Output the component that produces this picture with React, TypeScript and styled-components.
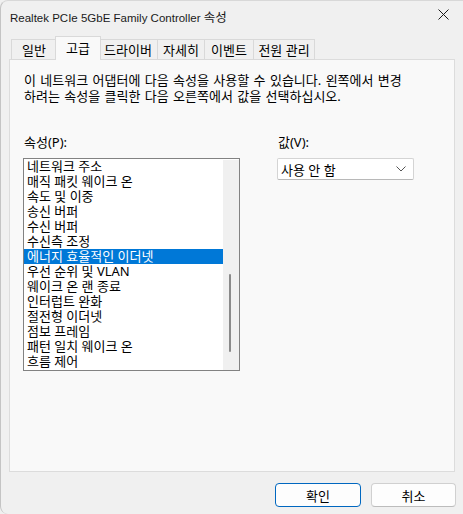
import React, { FC } from "react";
import styled, { createGlobalStyle } from "styled-components";

const GlobalStyle = createGlobalStyle`
  html, body {
    margin: 0;
    padding: 0;
    background: #f0f0f0;
  }
  * {
    box-sizing: border-box;
  }
`;

const font = `"Noto Sans", "Noto Sans CJK KR", sans-serif`;

const Window = styled.div`
  width: 463px;
  height: 514px;
  background: #f0f0f0;
  border-left: 1px solid #c4c4c4;
  border-top: 1px solid #d8d8d8;
  border-radius: 8px 0 0 8px;
  display: flex;
  flex-direction: column;
  font-family: ${font};
  font-size: 13px;
  color: #000;
  overflow: hidden;
`;

const TitleBar = styled.div`
  height: 29px;
  display: flex;
  align-items: center;
  justify-content: space-between;
  padding: 0 8px 0 9px;
`;

const Title = styled.div`
  font-family: "Liberation Sans", "Noto Sans CJK KR", sans-serif;
  font-size: 11.5px;
  color: #1a1a1a;
  padding-top: 1px;
`;

const TitleKo = styled.span`
  font-size: 12.5px;
`;

const CloseButton = styled.div`
  width: 24px;
  height: 24px;
  display: flex;
  align-items: center;
  justify-content: center;
  margin-top: -2px;
`;

const Body = styled.div`
  flex: 1;
  display: flex;
  flex-direction: column;
  padding: 7px 7px 0 8px;
`;

const TabStrip = styled.div`
  display: flex;
  align-items: flex-end;
  height: 23px;
  padding-left: 2px;
  position: relative;
  z-index: 1;
`;

const Tab = styled.div<{ $active?: boolean; $w: number }>`
  width: ${(p) => p.$w}px;
  height: ${(p) => (p.$active ? 24 : 21)}px;
  margin: ${(p) => (p.$active ? "0 -2px 0 -2px" : "0")};
  display: flex;
  align-items: center;
  justify-content: center;
  white-space: nowrap;
  background: ${(p) => (p.$active ? "#f9f9f9" : "#f0f0f0")};
  border: 1px solid #d9d9d9;
  border-bottom: ${(p) => (p.$active ? "none" : "1px solid #d9d9d9")};
  border-left-width: ${(p) => (p.$active ? 1 : 0)}px;
  padding-bottom: ${(p) => (p.$active ? 3 : 1)}px;
  position: relative;
  z-index: ${(p) => (p.$active ? 2 : 1)};
  &:first-child {
    border-left-width: 1px;
  }
`;

const Panel = styled.div`
  height: 413px;
  margin-top: -1px;
  margin-right: 1px;
  background: #f9f9f9;
  border: 1px solid #dcdcdc;
  padding: 12px 14px 0 13px;
  display: flex;
  flex-direction: column;
`;

const Description = styled.p`
  margin: 0 0 0 1px;
  line-height: 16px;
  word-spacing: 1px;
  white-space: nowrap;
`;

const Columns = styled.div`
  display: flex;
  gap: 37px;
  margin-top: 30px;
`;

const Column = styled.div<{ $w: number }>`
  width: ${(p) => p.$w}px;
  display: flex;
  flex-direction: column;
`;

const Label = styled.div`
  line-height: 16px;
  margin: 0 0 8px 1px;
`;

const ListBox = styled.div`
  height: 213px;
  background: #fff;
  border: 1px solid #828282;
  display: flex;
`;

const Items = styled.div`
  flex: 1;
  display: flex;
  flex-direction: column;
`;

const Item = styled.div<{ $selected?: boolean }>`
  height: 15px;
  line-height: 15px;
  padding-left: 3px;
  white-space: nowrap;
  background: ${(p) => (p.$selected ? "#0078d7" : "transparent")};
  color: ${(p) => (p.$selected ? "#fff" : "#000")};
`;

const ScrollTrack = styled.div`
  width: 16px;
  margin: 1px 0 0;
  height: 210px;
  background: #f0f0f0;
  display: flex;
  flex-direction: column;
  align-items: center;
  padding-top: 114px;
`;

const ScrollThumb = styled.div`
  width: 2px;
  height: 78px;
  background: #8a8a8a;
  border-radius: 1px;
  margin-left: -2px;
`;

const Select = styled.div`
  height: 22px;
  background: #fff;
  border: 1px solid #d4d4d4;
  border-bottom-color: #b8b8b8;
  border-radius: 2px;
  display: flex;
  align-items: center;
  justify-content: space-between;
  padding: 0 7px 0 3px;
`;

const Footer = styled.div`
  display: flex;
  justify-content: flex-end;
  gap: 10px;
  padding-top: 11px;
`;

const Button = styled.div<{ $default?: boolean; $w: number }>`
  width: ${(p) => p.$w}px;
  height: 24px;
  display: flex;
  align-items: center;
  justify-content: center;
  background: #fdfdfd;
  border: 1px solid ${(p) => (p.$default ? "#0067c0" : "#d0d0d0")};
  border-bottom-color: ${(p) => (p.$default ? "#0067c0" : "#bcbcbc")};
  border-radius: 4px;
`;

const tabs = [
  { label: "일반", w: 46 },
  { label: "고급", w: 46, active: true },
  { label: "드라이버", w: 59 },
  { label: "자세히", w: 47 },
  { label: "이벤트", w: 49 },
  { label: "전원 관리", w: 61 },
];

const properties = [
  "네트워크 주소",
  "매직 패킷 웨이크 온",
  "속도 및 이중",
  "송신 버퍼",
  "수신 버퍼",
  "수신측 조정",
  "에너지 효율적인 이더넷",
  "우선 순위 및 VLAN",
  "웨이크 온 랜 종료",
  "인터럽트 완화",
  "절전형 이더넷",
  "점보 프레임",
  "패턴 일치 웨이크 온",
  "흐름 제어",
];

const App: FC = () => {
  return (
    <>
      <GlobalStyle />
      <Window>
        <TitleBar>
          <Title>
            Realtek PCIe 5GbE Family Controller <TitleKo>속성</TitleKo>
          </Title>
          <CloseButton>
            <svg width="11" height="11" viewBox="0 0 11 11">
              <path d="M0.5 0.5 L10.5 10.5 M10.5 0.5 L0.5 10.5" stroke="#1a1a1a" strokeWidth="1" />
            </svg>
          </CloseButton>
        </TitleBar>
        <Body>
          <TabStrip>
            {tabs.map((t) => (
              <Tab key={t.label} $w={t.w} $active={t.active}>
                {t.label}
              </Tab>
            ))}
          </TabStrip>
          <Panel>
            <Description>
              이 네트워크 어댑터에 다음 속성을 사용할 수 있습니다. 왼쪽에서 변경
              <br />
              하려는 속성을 클릭한 다음 오른쪽에서 값을 선택하십시오.
            </Description>
            <Columns>
              <Column $w={217}>
                <Label>속성(P):</Label>
                <ListBox>
                  <Items>
                    {properties.map((p, i) => (
                      <Item key={p} $selected={i === 6}>
                        {p}
                      </Item>
                    ))}
                  </Items>
                  <ScrollTrack>
                    <ScrollThumb />
                  </ScrollTrack>
                </ListBox>
              </Column>
              <Column $w={137}>
                <Label>값(V):</Label>
                <Select>
                  <span>사용 안 함</span>
                  <svg width="10" height="6" viewBox="0 0 10 6">
                    <path d="M0.5 0.5 L5 5 L9.5 0.5" fill="none" stroke="#555" strokeWidth="1" />
                  </svg>
                </Select>
              </Column>
            </Columns>
          </Panel>
          <Footer>
            <Button $default $w={86}>
              확인
            </Button>
            <Button $w={85}>취소</Button>
          </Footer>
        </Body>
      </Window>
    </>
  );
};

export default App;
